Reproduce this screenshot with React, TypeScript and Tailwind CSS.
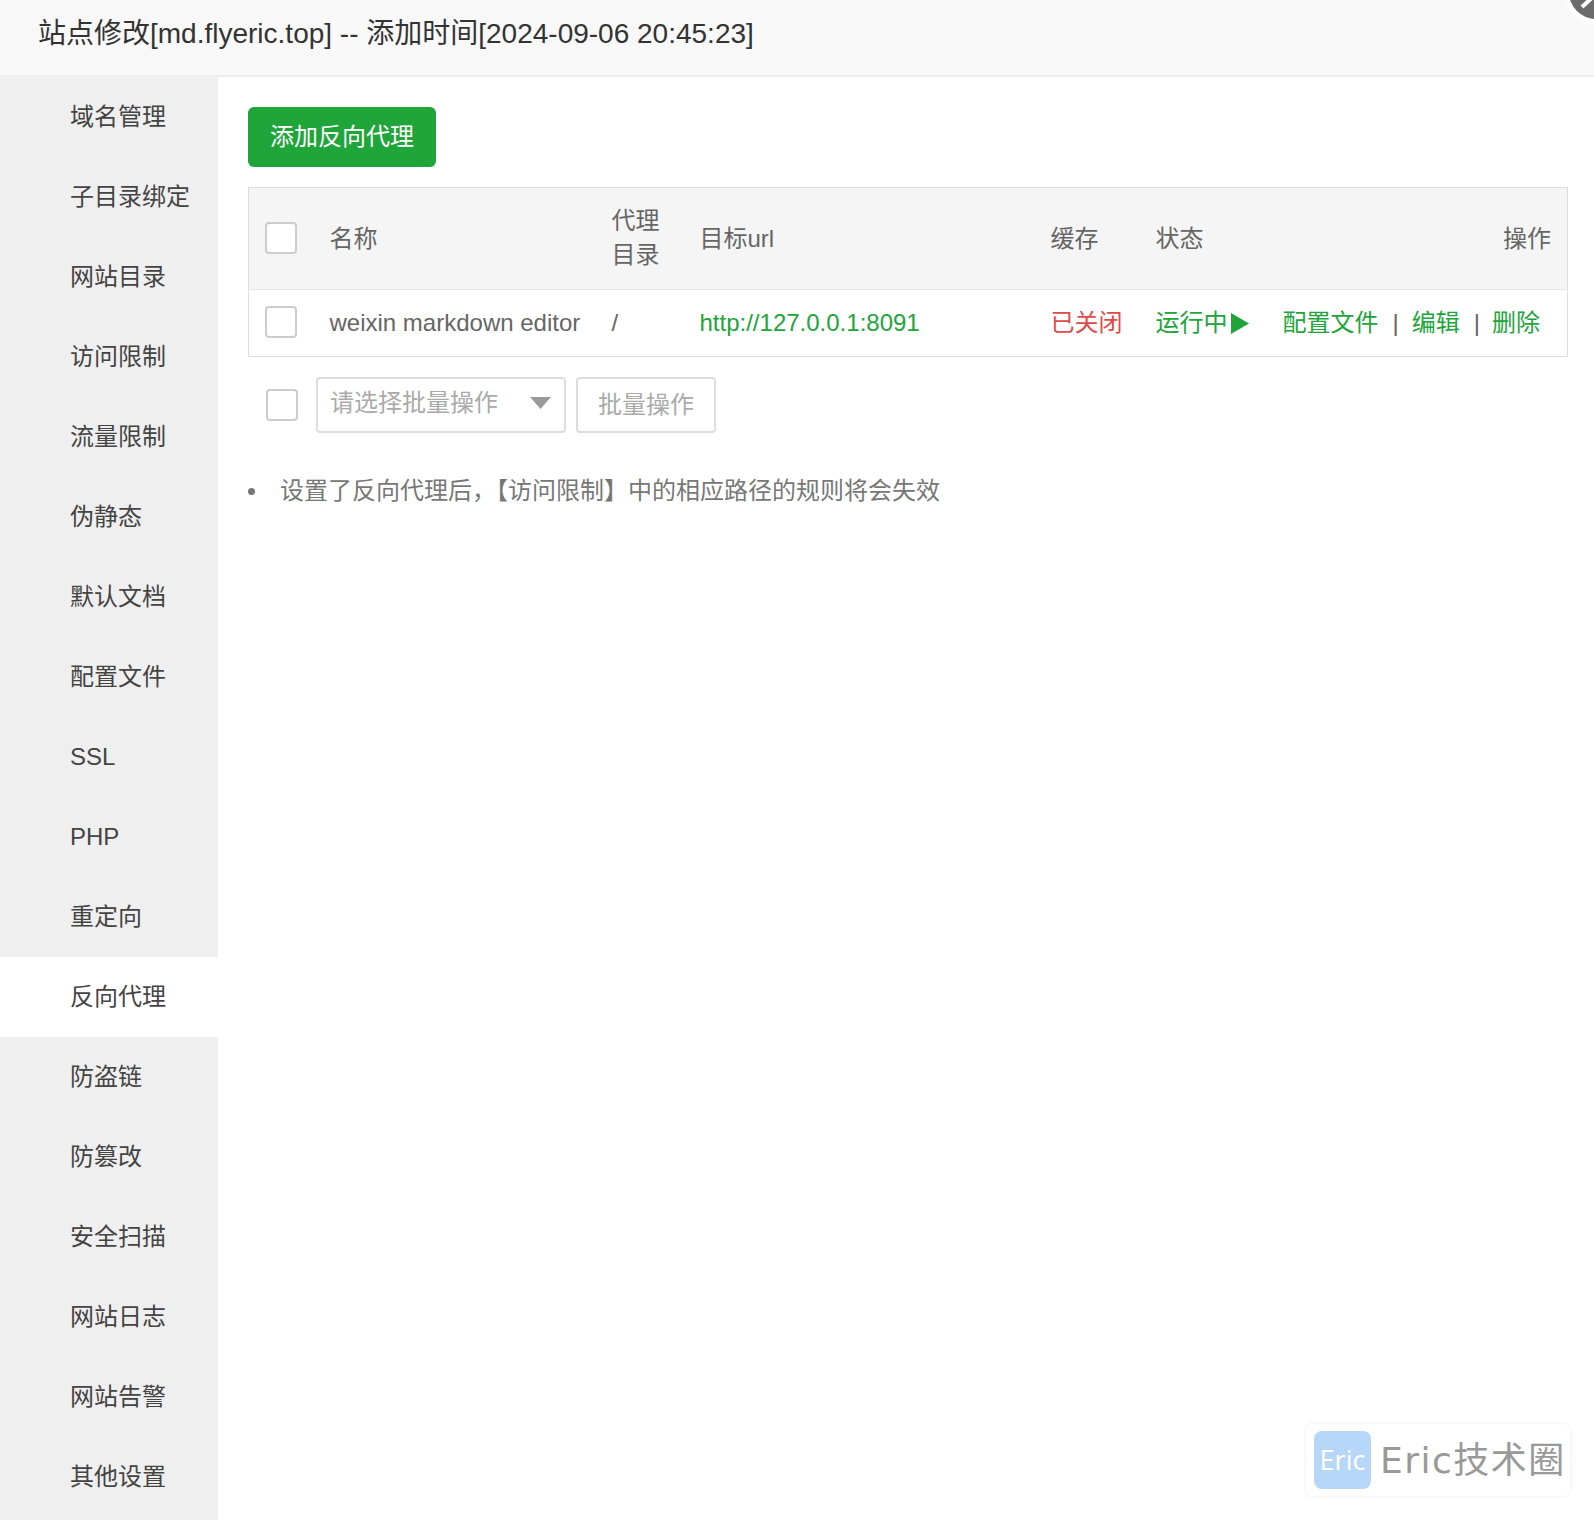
import React from "react";

const items = ["域名管理","子目录绑定","网站目录","访问限制","流量限制","伪静态","默认文档","配置文件","SSL","PHP","重定向","反向代理","防盗链","防篡改","安全扫描","网站日志","网站告警","其他设置"];

function Check({ className = "" }: { className?: string }) {
  return <span className={"block h-8 w-8 rounded-[4px] border-2 border-[#ccc] bg-white " + className} />;
}

export default function App() {
  return (
    <div className="relative flex h-[1520px] w-full flex-col overflow-hidden bg-white font-['Liberation_Sans','Noto_Sans_CJK_SC',sans-serif] text-[24px] text-[#666]">
      <div className="flex h-[77px] shrink-0 items-start border-b-2 border-[#eee] bg-[#f8f8f8] pl-[38px] pt-[14px] text-[28px] leading-[40px] text-[#333]">
        站点修改[md.flyeric.top] -- 添加时间[2024-09-06 20:45:23]
      </div>
      <div className="flex flex-1">
        <nav className="w-[218px] shrink-0 bg-[#efefef]">
          {items.map((t) => (
            <div key={t} className={"flex h-20 items-center pl-[70px] text-[#444] " + (t === "反向代理" ? "bg-white" : "")}>{t}</div>
          ))}
        </nav>
        <main className="flex-1 pl-[30px] pr-[26px] pt-[30px]">
          <button className="flex h-[60px] w-[188px] items-center justify-center rounded-[6px] bg-[#20a53a] text-white">添加反向代理</button>
          <table className="mt-5 w-full table-fixed border-collapse border border-[#ddd] leading-[34px]">
            <colgroup>
              <col className="w-[64px]" />
              <col className="w-[283px]" />
              <col className="w-[88px]" />
              <col className="w-[351px]" />
              <col className="w-[105px]" />
              <col className="w-[128px]" />
              <col />
            </colgroup>
            <thead>
              <tr className="h-[102px] border-b border-[#e6e6e6] bg-[#f5f5f5] text-left font-normal">
                <th className="pb-[2px] pl-4 font-normal"><Check /></th>
                <th className="pl-[17px] pr-4 font-normal">名称</th>
                <th className="px-4 pb-[2px] font-normal">代理目录</th>
                <th className="px-4 font-normal">目标url</th>
                <th className="px-4 font-normal">缓存</th>
                <th className="px-4 font-normal">状态</th>
                <th className="pl-4 pr-4 text-right font-normal">操作</th>
              </tr>
            </thead>
            <tbody>
              <tr className="h-[67px]">
                <td className="pb-[2px] pl-4"><Check /></td>
                <td className="whitespace-nowrap pl-[17px] pr-4">weixin markdown editor</td>
                <td className="px-4">/</td>
                <td className="px-4 text-[#20a53a]">http://127.0.0.1:8091</td>
                <td className="px-4 text-[#e04a4a]">已关闭</td>
                <td className="px-4">
                  <span className="flex items-center gap-[3px] text-[#20a53a]">
                    运行中
                    <svg width="18" height="21" viewBox="0 0 18 21" className="shrink-0"><path d="M0 0L18 10.5L0 21Z" fill="#20a53a" /></svg>
                  </span>
                </td>
                <td className="whitespace-nowrap pl-[15px] text-[#20a53a]">
                  配置文件<span className="ml-[14px] mr-[13px] text-[#666]">|</span>编辑<span className="ml-[14px] mr-3 text-[#666]">|</span>删除
                </td>
              </tr>
            </tbody>
          </table>
          <div className="mt-5 flex h-14 items-center">
            <Check className="ml-[18px]" />
            <div className="ml-[18px] flex h-14 w-[250px] items-center justify-between rounded-[4px] border-2 border-[#ddd] pb-1 pl-3 pr-[13px] text-[#aaa]">
              <span>请选择批量操作</span>
              <svg width="21" height="12" viewBox="0 0 21 12"><path d="M0 0H21L10.5 12Z" fill="#999" /></svg>
            </div>
            <button className="ml-[10px] flex h-14 w-[140px] items-center justify-center rounded-[4px] border-2 border-[#ddd] text-[#aaa]">批量操作</button>
          </div>
          <ul className="mt-[42px]">
            <li className="relative flex h-8 items-center pl-[32px] text-[#777]">
              <span className="absolute left-0 top-[13px] h-[7px] w-[7px] rounded-full bg-[#777]" />
              <span>设置了反向代理后，【访问限制】中的相应路径的规则将会失效</span>
            </li>
          </ul>
        </main>
      </div>

      <div className="absolute -right-[29px] -top-[35px] h-[54px] w-[54px] rounded-full bg-[#6b6b6b] shadow-[0_0_6px_4px_#fff]">
        <svg width="54" height="54" viewBox="0 0 54 54">
          <path d="M13 42L28 28" stroke="#fff" strokeWidth="4" fill="none" />
        </svg>
      </div>

      <div className="absolute left-[1306px] top-[1424px] flex h-[72px] w-[264px] items-center rounded-[6px] bg-white pl-2 shadow-[0_0_4px_rgba(0,0,0,0.08)]">
        <div className="flex h-[58px] w-[57px] items-center justify-center rounded-[8px] bg-[#b6d7f8] font-['Open_Sans',sans-serif] text-[27px] text-white">Eric</div>
        <div className="ml-[9px] whitespace-nowrap pt-[2px] font-['DejaVu_Sans','Noto_Sans_CJK_SC',sans-serif] text-[36px] tracking-[1.5px] text-[#999]">Eric技术圈</div>
      </div>
    </div>
  );
}
